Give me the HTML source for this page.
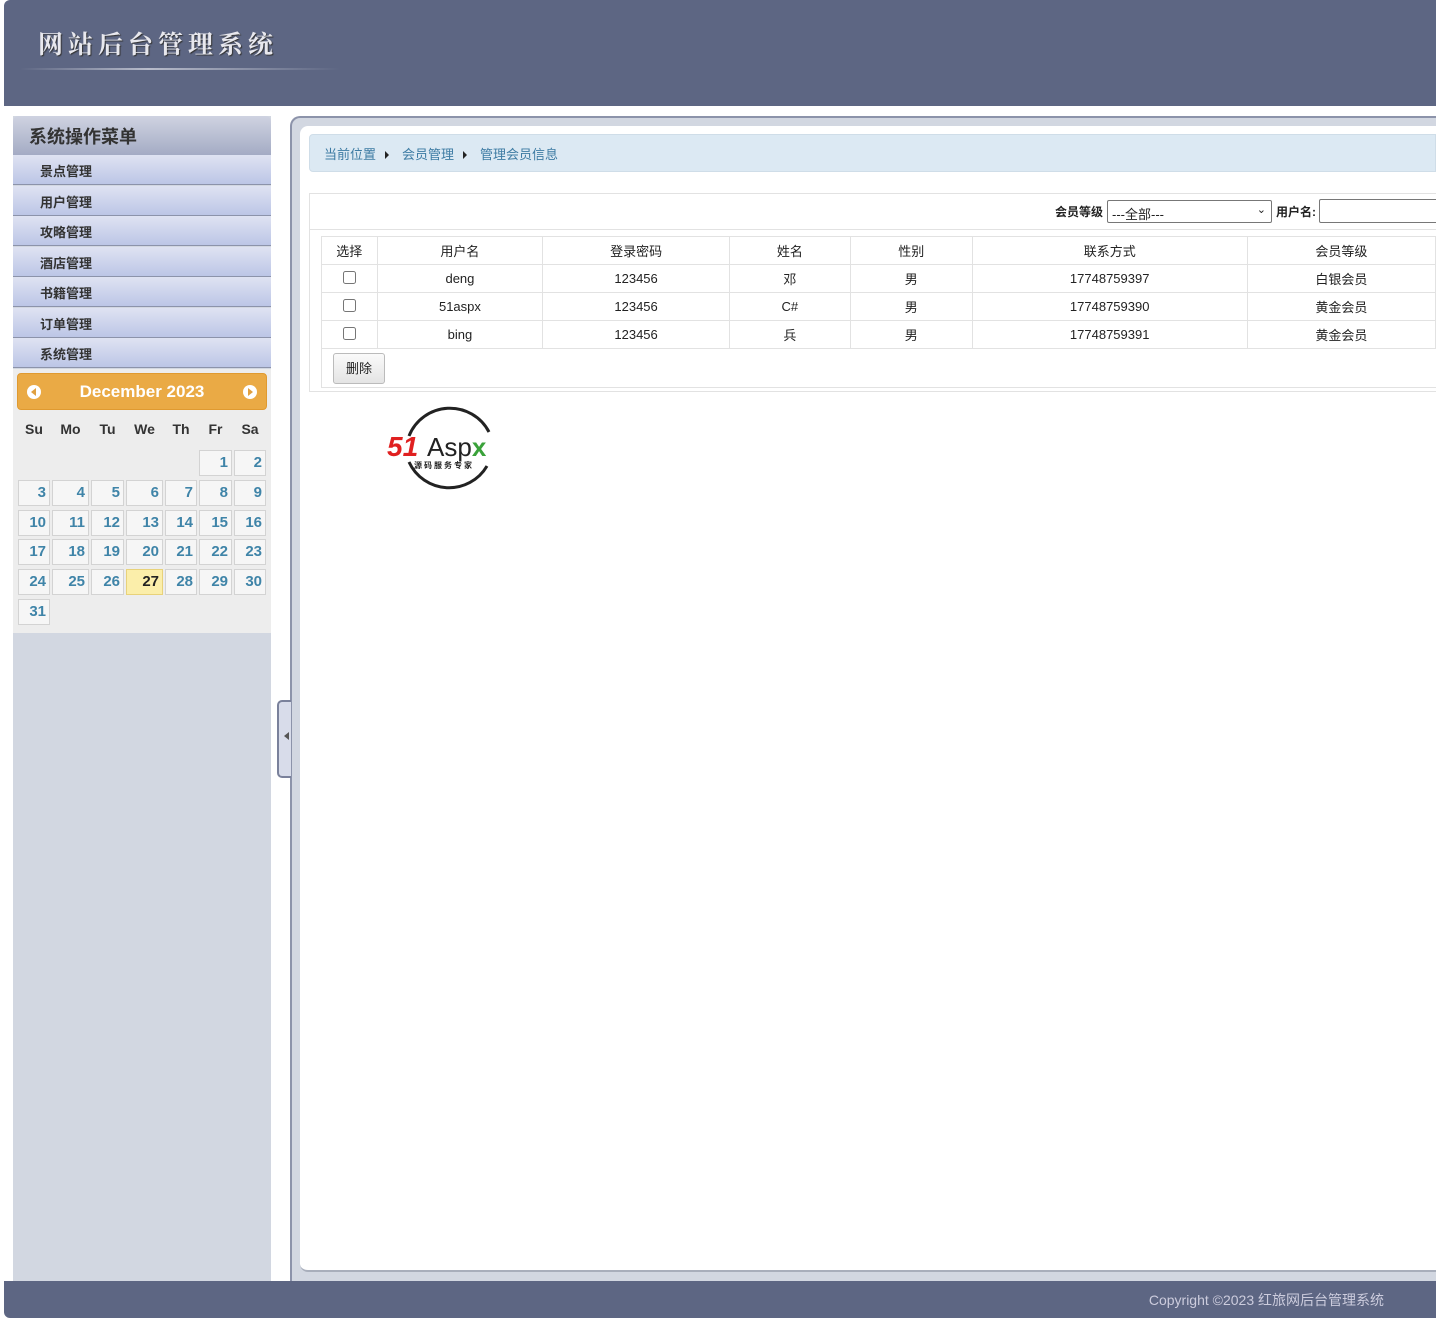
<!DOCTYPE html>
<html><head><meta charset="utf-8"><style>
*{margin:0;padding:0;box-sizing:border-box}
body{width:1436px;height:1322px;background:#fff;position:relative;overflow:hidden;font-family:"Liberation Sans","Noto Sans CJK SC",sans-serif;font-size:13px;color:#222}
.abs{position:absolute}
#hd{left:4px;top:0;width:1432px;height:106px;background:#5d6683;border-top-left-radius:6px}
#title{left:38px;top:25px;color:#e8e8ee;font-family:"Noto Serif CJK SC",serif;font-weight:bold;font-size:25px;letter-spacing:5px;text-shadow:1px 1px 1px #333;white-space:nowrap}
#line{left:20px;top:68px;width:320px;height:2px;background:linear-gradient(90deg,rgba(255,255,255,0),#b8bccb 40%,rgba(255,255,255,0))}
#side{left:13px;top:116px;width:258px;height:1166px;background:#d2d7e1}
#mh{left:13px;top:116px;width:258px;height:39px;background:linear-gradient(#cfd3e1,#a4abc4);border-radius:5px 5px 0 0;font-size:18px;font-weight:bold;color:#333;padding:7px 0 0 16px}
.mi{left:13px;width:258px;height:30px;background:linear-gradient(#dfe3f2,#bcc6e6);border-bottom:1px solid #8c93aa;font-size:13px;font-weight:bold;color:#333;padding:6px 0 0 27px}
#cal{left:13px;top:369px;width:258px;height:264px;background:#ededed}
#ch{left:17px;top:373px;width:250px;height:37px;background:#eaaa45;border:1px solid #e09a30;border-radius:4px;color:#fff;font-weight:bold;font-size:17px;text-align:center;line-height:35px}
.arr{position:absolute;top:11px;width:14px;height:14px;border-radius:50%;background:#fff}
.arr i{position:absolute;top:3px;width:0;height:0;border-top:4px solid transparent;border-bottom:4px solid transparent}
.dn{top:421px;font-weight:bold;font-size:14px;color:#333;text-align:center}
.d{height:26px;background:#f6f6f6;border:1px solid #d3d3d3;color:#3f84a8;font-weight:bold;font-size:15px;text-align:right;padding:3px 3px 0 0}
#frame{left:290px;top:116px;width:1146px;height:1166px;background:#d2d7e1;border-left:2px solid #8c93aa;border-top:2px solid #8c93aa;border-top-left-radius:10px}
#inner{left:300px;top:126px;width:1136px;height:1146px;background:#fff;border-radius:8px 0 0 8px;border-bottom:2px solid #a8aebb}
#bc{left:309px;top:134px;width:1127px;height:38px;background:#dce9f3;border:1px solid #cfdde8;border-radius:4px 0 0 4px;color:#3d7ba3;font-size:13px;padding:9px 0 0 14px}
.tri{display:inline-block;width:0;height:0;border-top:4px solid transparent;border-bottom:4px solid transparent;border-left:4px solid #222;margin:0 13px 0 9px}
#box{left:309px;top:193px;width:1127px;height:199px;border:1px solid #e2e2e2;border-right:none}
table{position:absolute;left:321px;top:236px;border-collapse:collapse;font-size:13px;table-layout:fixed}
td{border:1px solid #e2e2e2;text-align:center;height:28px}
#foot{left:4px;top:1281px;width:1432px;height:37px;background:#5d6683;border-bottom-left-radius:6px;color:#ccd;font-size:14px;text-align:right;padding:9px 52px 0 0}
</style></head><body>
<div id="hd" class="abs"></div>
<div id="title" class="abs">网站后台管理系统</div>
<div id="line" class="abs"></div>
<div id="side" class="abs"></div>
<div id="mh" class="abs">系统操作菜单</div>
<div class="abs mi" style="top:155px">景点管理</div>
<div class="abs mi" style="top:186px">用户管理</div>
<div class="abs mi" style="top:216px">攻略管理</div>
<div class="abs mi" style="top:247px">酒店管理</div>
<div class="abs mi" style="top:277px">书籍管理</div>
<div class="abs mi" style="top:308px">订单管理</div>
<div class="abs mi" style="top:338px">系统管理</div>
<div id="cal" class="abs"></div>
<div id="ch" class="abs">December 2023<span class="arr" style="left:9px"><i style="left:4px;border-right:5px solid #e0a040"></i></span><span class="arr" style="right:9px"><i style="left:5px;border-left:5px solid #e0a040"></i></span></div>
<div class="abs dn" style="left:19px;width:30px">Su</div><div class="abs dn" style="left:52px;width:37px">Mo</div><div class="abs dn" style="left:91px;width:33px">Tu</div><div class="abs dn" style="left:126px;width:37px">We</div><div class="abs dn" style="left:165px;width:32px">Th</div><div class="abs dn" style="left:199px;width:33px">Fr</div><div class="abs dn" style="left:234px;width:32px">Sa</div>
<div id="days"></div>
<div id="frame" class="abs"></div>
<div class="abs" style="left:271px;top:116px;width:19px;height:1166px;background:#fff"></div>
<div class="abs" style="left:277px;top:700px;width:14px;height:78px;background:#d8dcea;border:2px solid #7a819b;border-right:none;border-radius:5px 0 0 5px"></div>
<div class="abs" style="left:284px;top:732px;border-top:4px solid transparent;border-bottom:4px solid transparent;border-right:5px solid #555"></div>
<div id="inner" class="abs"></div>
<div id="bc" class="abs">当前位置<span class="tri"></span>会员管理<span class="tri"></span>管理会员信息</div>
<div id="box" class="abs"></div>
<div class="abs" style="left:309px;top:229px;width:1127px;border-top:1px solid #e2e2e2"></div>
<div class="abs" style="left:1055px;top:203px;font-weight:bold;font-size:12px">会员等级</div>
<div class="abs" style="left:1107px;top:200px;width:165px;height:23px;border:1px solid #777;border-radius:2px;font-size:13px;padding:3px 0 0 4px">---全部---<span style="position:absolute;right:5px;top:2px;font-size:11px">&#8964;</span></div>
<div class="abs" style="left:1276px;top:203px;font-weight:bold;font-size:12px">用户名:</div>
<div class="abs" style="left:1319px;top:199px;width:130px;height:24px;border:1px solid #777;border-radius:2px"></div>
<table>
<tr><td style="width:56px">选择</td><td style="width:167px">用户名</td><td style="width:188px">登录密码</td><td style="width:122px">姓名</td><td style="width:123px">性别</td><td style="width:277px">联系方式</td><td style="width:190px">会员等级</td></tr>
<tr><td style="height:28px"><input type="checkbox"></td><td>deng</td><td>123456</td><td>邓</td><td>男</td><td>17748759397</td><td>白银会员</td></tr>
<tr><td style="height:27px"><input type="checkbox"></td><td>51aspx</td><td>123456</td><td>C#</td><td>男</td><td>17748759390</td><td>黄金会员</td></tr>
<tr><td style="height:28px"><input type="checkbox"></td><td>bing</td><td>123456</td><td>兵</td><td>男</td><td>17748759391</td><td>黄金会员</td></tr>
</table>
<div class="abs" style="left:321px;top:348px;width:1115px;height:40px;border:1px solid #e2e2e2;border-right:none"></div>
<div class="abs" style="left:333px;top:353px;width:52px;height:31px;background:linear-gradient(#fafafa,#e4e4e4);border:1px solid #bbb;border-radius:3px;font-size:13px;text-align:center;line-height:29px">删除</div>
<svg class="abs" style="left:385px;top:400px" width="130" height="96" viewBox="0 0 130 96">
<path d="M24 36 A44 44 0 0 1 104 32" fill="none" stroke="#222" stroke-width="3"/>
<path d="M102 66 A44 44 0 0 1 24 62" fill="none" stroke="#222" stroke-width="3"/>
<text x="2" y="56" font-family="Liberation Sans" font-weight="bold" font-style="italic" font-size="28" fill="#e02020">51</text>
<text x="42" y="56" font-family="Liberation Sans" font-size="26" fill="#222">Asp<tspan fill="#3aa23a" font-weight="bold">x</tspan></text>
<text x="29" y="68" font-family="Noto Sans CJK SC" font-size="8" font-weight="bold" fill="#222" letter-spacing="2">源码服务专家</text>
</svg>
<div id="foot" class="abs">Copyright ©2023 红旅网后台管理系统</div>
<script>
var xs=[[18,32],[52,37],[91,33],[126,37],[165,32],[199,33],[234,32]],ys=[450,480,510,539,569,599],h='';
var d=1,r=0,c=5;
while(d<=31){var x=xs[c];var st=d==27?'background:#fbeeaa;border-color:#e8d27a;color:#222':'';
h+='<div class="abs d" style="left:'+x[0]+'px;top:'+ys[r]+'px;width:'+x[1]+'px;'+st+'">'+d+'</div>';d++;c++;if(c>6){c=0;r++;}}
document.getElementById('days').innerHTML=h;
</script>
</body></html>
